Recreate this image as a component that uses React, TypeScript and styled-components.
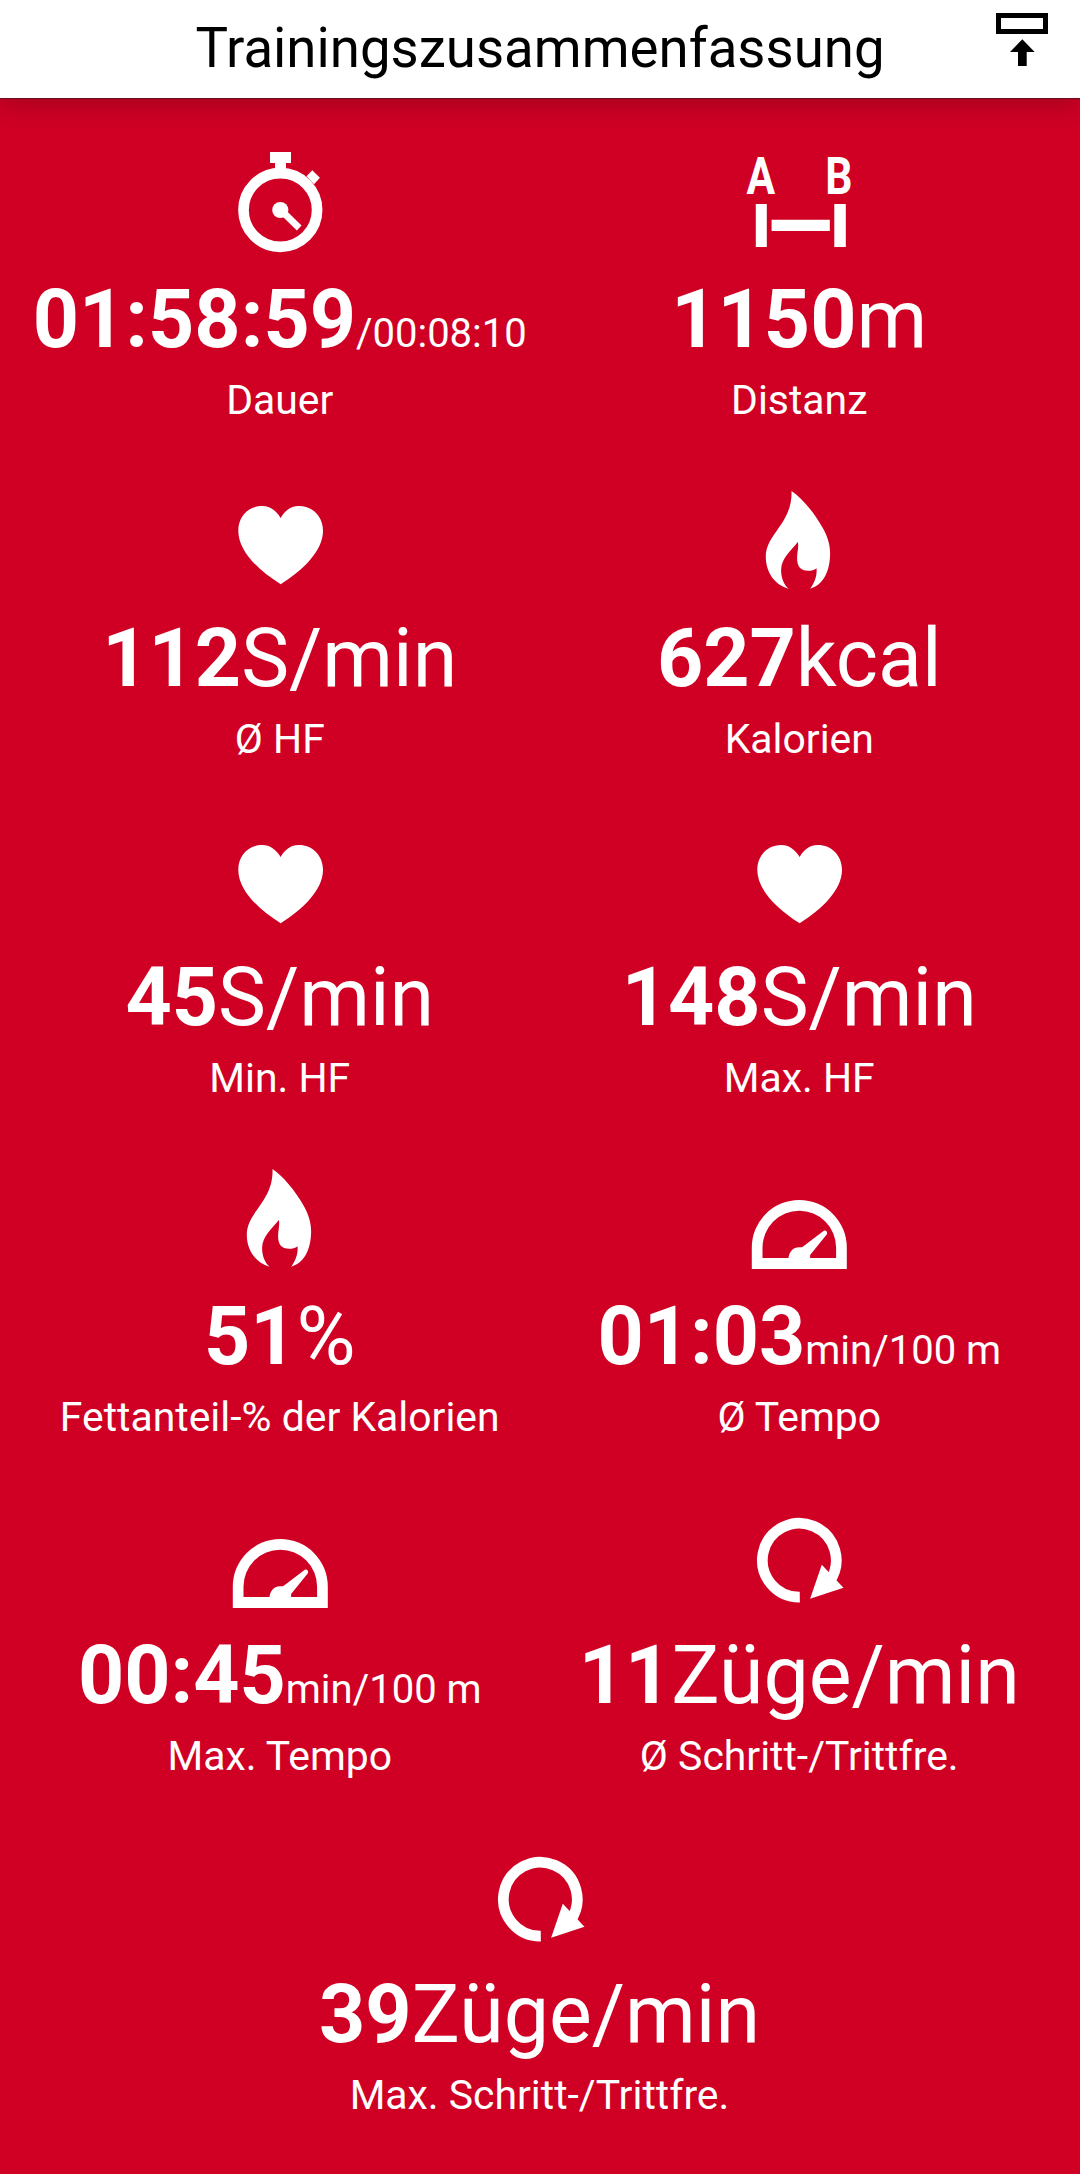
import React from "react";
import styled, { createGlobalStyle } from "styled-components";

const GlobalStyle = createGlobalStyle`
  body {
    margin: 0;
    background: #d00025;
    font-family: Roboto, "Liberation Sans", sans-serif;
  }
`;

const Screen = styled.div`
  display: flex;
  flex-direction: column;
  min-height: 2174px;
  overflow: hidden;
`;

const Header = styled.header`
  display: grid;
  grid-template-columns: 84px 1fr 84px;
  height: 98px;
  background: #fff;
  color: #000;
  box-shadow: 0 1px 1px rgba(40, 20, 30, 0.5), 0 6px 26px rgba(60, 0, 15, 0.3);
`;

const Title = styled.h1`
  grid-column: 2;
  margin: 0;
  text-align: center;
  font-size: 54.6px;
  font-weight: 400;
  line-height: 96px;
  white-space: nowrap;
`;

const ExportButton = styled.button`
  display: flex;
  align-items: flex-start;
  justify-content: flex-start;
  padding: 13px 0 0;
  border: 0;
  background: none;
`;

const Metrics = styled.main`
  display: flex;
  flex-wrap: wrap;
  justify-content: center;
  padding: 54px 21px 0 20px;
`;

const Metric = styled.section`
  display: flex;
  flex-direction: column;
  align-items: center;
  width: 50%;
  height: 339px;
  color: #fff;
`;

const Icon = styled.svg`
  display: block;
  flex: none;
  width: 100px;
  height: 100px;
  overflow: visible;
  fill: #fff;
`;

const Reading = styled.div`
  margin-top: 19px;
  height: 97px;
  line-height: 97px;
  font-size: 80.7px;
  white-space: nowrap;
`;

const Value = styled.span`
  font-weight: 700;
`;

const Unit = styled.span<{ $small?: boolean }>`
  font-size: ${(p) => (p.$small ? "40px" : "80.7px")};
`;

const Label = styled.div`
  margin-top: 8px;
  font-size: 40.9px;
  line-height: 48px;
  white-space: nowrap;
`;

const Letter = styled.text`
  font-size: 52px;
  font-weight: 700;
`;

const Stopwatch = () => (
  <Icon viewBox="0 0 100 100">
    <circle cx="50.3" cy="58" r="36.8" fill="none" stroke="#fff" strokeWidth="10.7" />
    <path d="M40 0H61V11H56V18H45V11H40Z" />
    <path d="M82.3 18.3L89.9 25.7L84 32.3L76.5 24.3Z" />
    <circle cx="50.3" cy="58" r="8.1" />
    <path d="M50.3 57.5L69.2 76" stroke="#fff" strokeWidth="6.7" />
  </Icon>
);

const Distance = () => (
  <Icon viewBox="-0.8 0 100 100">
    <Letter transform="translate(-3.2 42) scale(.82 1)">A</Letter>
    <Letter transform="translate(75.4 42) scale(.82 1)">B</Letter>
    <path d="M6 52H17V95H6ZM84.5 52H96V95H84.5ZM21.8 67.7H80V79H21.8Z" />
  </Icon>
);

const Heart = () => (
  <Icon viewBox="0 0 100 100">
    <path d="M50.7 27C46 19.5 40 15 32.3 15C18.5 15 8.3 25.5 8.3 39.7C8.3 60 28 79 50.7 93.3C73 79 93 60 93 39.7C93 25.5 82.5 15 68.8 15C61 15 54.8 19.5 50.7 27Z" />
  </Icon>
);

const Flame = () => (
  <Icon viewBox="-0.8 0 100 100">
    <path d="M41.7 0C52 7 64 21 73 37C78 46 80.3 54 80.3 62.5C80.3 79 74 94 60.3 97.7C65 92 67.5 84 66.7 77.3C64.5 79.3 61.5 79.8 58.3 79.8C51 79.8 47.3 76 47.3 67.3C47.3 61 49.2 56 48 51C42 59 31.3 67 31.3 79C31.3 87 34 93.5 38.7 97.7C24.5 93.5 16 81 16 65.7C16 43 43 32 41.7 0Z" />
  </Icon>
);

const Gauge = () => (
  <Icon viewBox="-0.8 0 100 100">
    <path
      fillRule="evenodd"
      d="M2 100V78.5A47.5 47.5 0 0 1 97 78.5V100ZM12.7 89H86.3V78.5A36.8 36.8 0 0 0 12.7 78.5Z"
    />
    <path d="M38.7 90C38.7 83 43.5 78.3 49.3 78.3H52.3L74 61.7Q77.5 61 77.3 65L60.3 86V90Z" />
  </Icon>
);

const Cadence = () => (
  <Icon viewBox="-0.8 0 100 100">
    <path
      d="M50 89.1A36.9 36.9 0 1 1 79.7 73.4"
      fill="none"
      stroke="#fff"
      strokeWidth="10.7"
    />
    <path d="M72 56.7L93.7 79.7L60.3 90.7Z" />
  </Icon>
);

type MetricData = {
  icon: React.ComponentType;
  value: string;
  unit: string;
  small?: boolean;
  label: string;
};

const metrics: MetricData[] = [
  { icon: Stopwatch, value: "01:58:59", unit: "/00:08:10", small: true, label: "Dauer" },
  { icon: Distance, value: "1150", unit: "m", label: "Distanz" },
  { icon: Heart, value: "112", unit: "S/min", label: "Ø HF" },
  { icon: Flame, value: "627", unit: "kcal", label: "Kalorien" },
  { icon: Heart, value: "45", unit: "S/min", label: "Min. HF" },
  { icon: Heart, value: "148", unit: "S/min", label: "Max. HF" },
  { icon: Flame, value: "51", unit: "%", label: "Fettanteil-% der Kalorien" },
  { icon: Gauge, value: "01:03", unit: "min/100 m", small: true, label: "Ø Tempo" },
  { icon: Gauge, value: "00:45", unit: "min/100 m", small: true, label: "Max. Tempo" },
  { icon: Cadence, value: "11", unit: "Züge/min", label: "Ø Schritt-/Trittfre." },
  { icon: Cadence, value: "39", unit: "Züge/min", label: "Max. Schritt-/Trittfre." },
];

export default function App() {
  return (
    <Screen>
      <GlobalStyle />
      <Header>
        <Title>Trainingszusammenfassung</Title>
        <ExportButton aria-label="Export">
          <svg width="52" height="53" viewBox="0 0 52 53">
            <path fillRule="evenodd" d="M0 0H52V21H0ZM5 5V16H47V5Z" />
            <path d="M26.3 26.3L38.7 39H30.7V53H22V39H14Z" />
          </svg>
        </ExportButton>
      </Header>
      <Metrics>
        {metrics.map(({ icon: Glyph, value, unit, small, label }) => (
          <Metric key={label}>
            <Glyph />
            <Reading>
              <Value>{value}</Value>
              <Unit $small={small}>{unit}</Unit>
            </Reading>
            <Label>{label}</Label>
          </Metric>
        ))}
      </Metrics>
    </Screen>
  );
}
